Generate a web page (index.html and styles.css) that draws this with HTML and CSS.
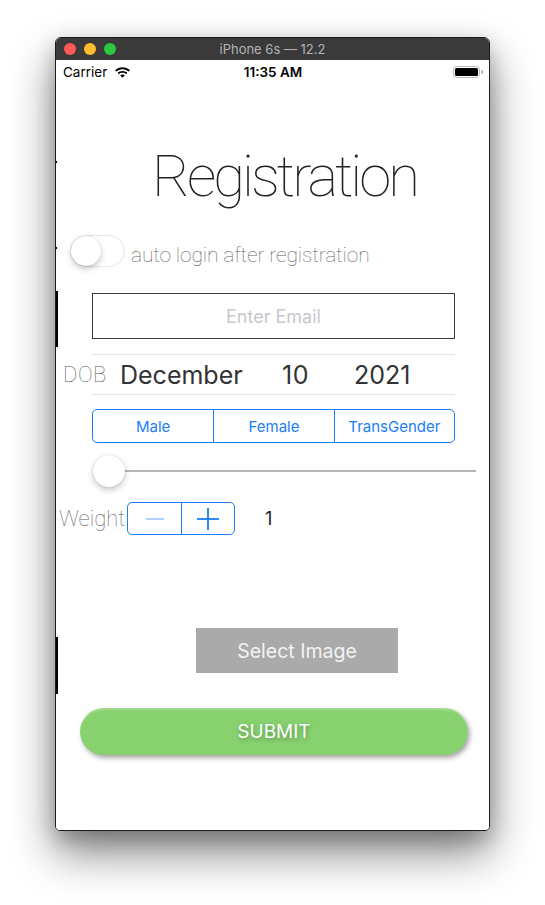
FILE: index.html
```html
<!DOCTYPE html>
<html>
<head>
<meta charset="utf-8">
<link rel="stylesheet" href="styles.css">
</head>
<body>
<div class="window">
  <div class="titlebar">
    <div class="lights"><span class="light red"></span><span class="light yellow"></span><span class="light green"></span></div>
    <div class="wtitle">iPhone 6s — 12.2</div>
  </div>
  <div class="screen">
    <span class="mark m1"></span><span class="mark m2"></span><span class="mark m3"></span><span class="mark m4"></span>
    <div class="status">
      <div class="st-left">Carrier
        <svg class="wifi" width="15" height="11" viewBox="0 0 15 11"><path d="M7.5 0.3C4.6 0.3 2 1.4 0 3.2L1.3 4.6C2.9 3.1 5.1 2.2 7.5 2.2C9.9 2.2 12.1 3.1 13.7 4.6L15 3.2C13 1.4 10.4 0.3 7.5 0.3Z"/><path d="M7.5 3.9C5.6 3.9 3.9 4.6 2.6 5.8L3.9 7.2C4.9 6.3 6.1 5.8 7.5 5.8C8.9 5.8 10.1 6.3 11.1 7.2L12.4 5.8C11.1 4.6 9.4 3.9 7.5 3.9Z"/><path d="M7.5 7.5C6.6 7.5 5.8 7.8 5.2 8.4L7.5 10.8L9.8 8.4C9.2 7.8 8.4 7.5 7.5 7.5Z"/></svg>
      </div>
      <div class="st-time">11:35 AM</div>
      <div class="st-right"><span class="battery"><span class="batt-fill"></span></span><span class="nub"></span></div>
    </div>
    <div class="title">Registration</div>
    <div class="toggle-row">
      <span class="switch"><span class="knob"></span></span>
      <span class="thin toggle-label">auto login after registration</span>
    </div>
    <div class="email">Enter Email</div>
    <div class="sep"></div>
    <div class="dob-row">
      <span class="thin dob-label">DOB</span>
      <span class="dob-month">December</span>
      <span class="dob-day">10</span>
      <span class="dob-year">2021</span>
    </div>
    <div class="sep sep2"></div>
    <div class="segmented">
      <div class="seg">Male</div>
      <div class="seg">Female</div>
      <div class="seg">TransGender</div>
    </div>
    <div class="slider"><span class="thumb"></span></div>
    <div class="weight-row">
      <span class="thin weight-label">Weight</span>
      <div class="stepper">
        <div class="step"><svg width="18" height="2" viewBox="0 0 18 2"><line x1="0" y1="1" x2="18" y2="1" stroke="#8dc0fb" stroke-width="1.4"/></svg></div>
        <div class="step"><svg width="22" height="22" viewBox="0 0 22 22"><line x1="0" y1="11" x2="22" y2="11" stroke="#1a7df7" stroke-width="1.8"/><line x1="11" y1="0" x2="11" y2="22" stroke="#1a7df7" stroke-width="1.8"/></svg></div>
      </div>
      <span class="weight-val">1</span>
    </div>
    <div class="select-btn">Select Image</div>
    <div class="submit">SUBMIT</div>
  </div>
</div>
</body>
</html>
```
FILE: styles.css
```css
html, body { margin: 0; padding: 0; }
body {
  background: #ffffff;
  width: 545px;
  height: 905px;
  overflow: hidden;
  padding: 37px 0 0 55px;
  box-sizing: border-box;
  font-family: "Inter", "Liberation Sans", sans-serif;
}
.window {
  width: 435px;
  height: 794px;
  box-sizing: border-box;
  border: 1px solid #1c1c1c;
  border-radius: 6px 6px 5px 5px;
  overflow: hidden;
  background: #fff;
  box-shadow: 0 22px 45px rgba(0,0,0,0.48), 0 8px 20px rgba(0,0,0,0.22);
}
.titlebar {
  height: 22px;
  background: #3a3a3a;
  display: grid;
  grid-template-columns: 1fr;
  align-items: center;
}
.lights { grid-area: 1 / 1; display: flex; gap: 8px; padding-left: 8px; }
.light { width: 12px; height: 12px; border-radius: 50%; display: block; }
.red { background: #fd5a55; }
.yellow { background: #febc2e; }
.green { background: #2bc840; }
.wtitle { grid-area: 1 / 1; text-align: center; color: #b4b4b4; font-size: 13px; }
.screen { position: relative; height: 770px; background: #fff; }
.mark { position: absolute; left: 0; width: 2px; background: #000; }
.m1 { top: 101px; height: 2px; width: 1px; }
.m2 { top: 187px; height: 2px; width: 1px; }
.m3 { top: 231px; height: 56px; }
.m4 { top: 577px; height: 57px; }
.status {
  height: 24px;
  display: grid;
  grid-template-columns: 1fr auto 1fr;
  align-items: center;
  padding: 0 6px 0 7px;
  font-size: 13.5px;
  color: #000;
}
.st-left { display: flex; align-items: center; gap: 8px; }
.wifi { fill: #000; display: block; }
.st-time { font-weight: 600; font-size: 13.5px; }
.st-right { display: flex; justify-content: flex-end; align-items: center; }
.battery {
  width: 27px; height: 12px; box-sizing: border-box;
  border: 1.5px solid #b9b9b9; border-radius: 3.5px; padding: 1px; display: block;
}
.batt-fill { display: block; width: 100%; height: 100%; background: #000; border-radius: 1.5px; }
.nub { width: 2px; height: 4px; background: #b9b9b9; border-radius: 0 1px 1px 0; margin-left: 1px; display: block; }
.thin { font-family: "Roboto", "Liberation Sans", sans-serif; font-weight: 100; color: #5f5f5f; font-size: 22px; }
.title {
  margin: 62px 0 0 96px;
  height: 62px;
  font-family: "Roboto", "Liberation Sans", sans-serif;
  font-weight: 100;
  font-size: 58px;
  line-height: 60px;
  color: #222;
  letter-spacing: -3px;
  white-space: nowrap;
}
.toggle-row { margin: 27px 0 0 14px; height: 32px; display: flex; align-items: center; gap: 6px; }
.switch {
  width: 55px; height: 32px; box-sizing: border-box; border-radius: 16px;
  border: 1.5px solid #e6e6e6; background: #fff; display: flex; align-items: center; padding: 0;
}
.knob {
  width: 30px; height: 30px; border-radius: 50%; background: #fff; display: block;
  box-shadow: 0 3px 6px rgba(0,0,0,0.22), 0 0 1px rgba(0,0,0,0.2);
}
.toggle-label { white-space: nowrap; font-size: 21px; letter-spacing: -0.15px; margin-top: 8px; }
.email {
  margin: 26px 0 0 36px;
  width: 363px; height: 46px; box-sizing: border-box;
  border: 1px solid #3a3a3a;
  display: flex; align-items: center; justify-content: center;
  color: #c7c7cd; font-size: 18px;
}
.sep { margin: 15px 0 0 36px; width: 363px; height: 1px; background: #e2e2e2; }
.sep2 { margin-top: 0; }
.dob-row { margin-left: 7px; height: 39px; display: flex; align-items: center; color: #333; font-size: 25px; }
.dob-label { width: 57px; letter-spacing: 0.5px; }
.dob-month { width: 162px; }
.dob-day { width: 72px; letter-spacing: 0.5px; }
.segmented {
  margin: 14px 0 0 36px;
  width: 363px; height: 34px; box-sizing: border-box;
  border: 1px solid #1a7df7; border-radius: 5px;
  display: grid; grid-template-columns: 1fr 1fr 1fr;
  color: #1a7df7; font-size: 15px;
}
.seg { display: flex; align-items: center; justify-content: center; }
.seg + .seg { border-left: 1px solid #1a7df7; }
.slider {
  margin: 12px 0 0 37px;
  width: 383px; height: 32px;
  display: flex; align-items: center;
  background: linear-gradient(#b6b6b6, #b6b6b6) no-repeat center / 100% 2px;
}
.thumb {
  width: 32px; height: 32px; border-radius: 50%; background: #fff; display: block;
  box-shadow: 0 3px 6px rgba(0,0,0,0.22), 0 0 1px rgba(0,0,0,0.25);
}
.weight-row { margin: 15px 0 0 3px; height: 33px; display: flex; align-items: center; }
.weight-label { width: 68px; }
.stepper {
  width: 108px; height: 33px; box-sizing: border-box;
  border: 1px solid #1a7df7; border-radius: 5px;
  display: grid; grid-template-columns: 1fr 1fr;
}
.step { display: flex; align-items: center; justify-content: center; }
.step + .step { border-left: 1px solid #1a7df7; }
.weight-val { margin-left: 30px; font-size: 18px; color: #222; }
.select-btn {
  margin: 93px 0 0 140px;
  width: 202px; height: 45px;
  background: #aaaaaa;
  display: flex; align-items: center; justify-content: center;
  color: #f3f3f3; font-size: 19.5px;
}
.submit {
  margin: 35px 0 0 24px;
  width: 388px; height: 47px; border-radius: 24px;
  background: #87d16f;
  box-shadow: 2px 3px 5px rgba(0,0,0,0.35), inset 0 2px 2px rgba(255,255,255,0.25);
  display: flex; align-items: center; justify-content: center;
  color: #fff; font-size: 19px;
  text-shadow: 1px 2px 4px rgba(0,0,0,0.3);
}
```
